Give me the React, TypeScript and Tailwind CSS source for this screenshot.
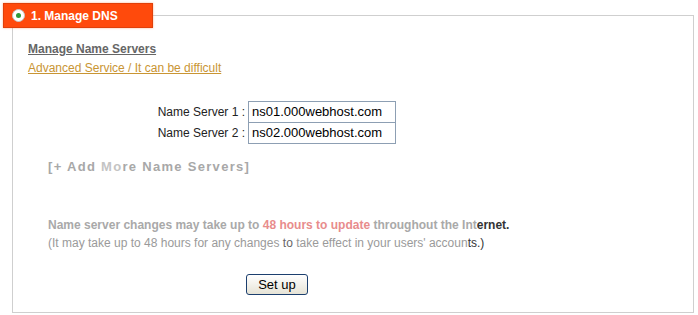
export default function App() {
  return (
    <div className="w-[698px] h-[315px] bg-white pt-[3px] pl-[3px] font-['Liberation_Sans',Arial,sans-serif]">
      {/* Tab */}
      <div className="relative z-10 w-[150px] h-[25px] bg-[#ff4a0c] border border-[#e0400a] shadow-[0_0_2px_rgba(255,120,60,0.6)] flex items-center pl-[8px] gap-[6px]">
        <span className="w-[13px] h-[13px] rounded-full bg-white border border-[#c8c8c8] flex items-center justify-center">
          <span className="w-[5px] h-[5px] rounded-full bg-[#2e9a3a]" />
        </span>
        <span className="text-white font-bold text-[12px] leading-none">1. Manage DNS</span>
      </div>

      {/* Frame */}
      <div className="-mt-[13px] ml-[9px] w-[682px] h-[298px] border border-[#cfcfcf] pl-[15px] pt-[24px]">
        <div className="text-[12px] leading-[19px] font-bold text-[#666666] underline">Manage Name Servers</div>
        <div className="text-[12px] leading-[19px] text-[#c99533] underline">Advanced Service / It can be difficult</div>

        <div className="mt-[23px] flex flex-col">
          <div className="flex items-center">
            <span className="w-[220px] text-right pr-[3px] text-[12px] text-[#222]">Name Server 1 :</span>
            <div className="w-[148px] h-[22px] border border-[#8d9fb3] flex items-center pl-[3px] text-[13px] text-black">ns01.000webhost.com</div>
          </div>
          <div className="flex items-center -mt-[1px]">
            <span className="w-[220px] text-right pr-[3px] text-[12px] text-[#222]">Name Server 2 :</span>
            <div className="w-[148px] h-[22px] border border-[#8d9fb3] flex items-center pl-[3px] text-[13px] text-black">ns02.000webhost.com</div>
          </div>
        </div>

        <div className="mt-[14px] ml-[20px] text-[13px] leading-[18px] font-bold tracking-[1.3px] text-[#a8a8a8]">
          [+ Add <span className="text-[#c4c4c4]">Mo</span>re Name Servers]
        </div>

        <div className="mt-[40px] ml-[20px] text-[12px] leading-[18px] font-bold text-[#a9a9a9]">
          Name server changes may take up to <span className="text-[#e88c8c]">48 hours to update</span> throughout the Int<span className="text-[#333]">ernet.</span>
        </div>
        <div className="ml-[20px] text-[12px] leading-[18px] text-[#9a9a9a]">
          (It may take up to 48 hours for any changes <span className="text-[#666]">to</span> take effect in your users' accoun<span className="text-[#333]">ts.)</span>
        </div>

        <div className="mt-[20px] ml-[218px]">
          <button className="w-[62px] h-[21px] rounded-[3px] border border-[#1c3f6e] bg-gradient-to-b from-white to-[#e6e3d6] text-[13px] leading-none text-black">
            Set up
          </button>
        </div>
      </div>
    </div>
  );
}
